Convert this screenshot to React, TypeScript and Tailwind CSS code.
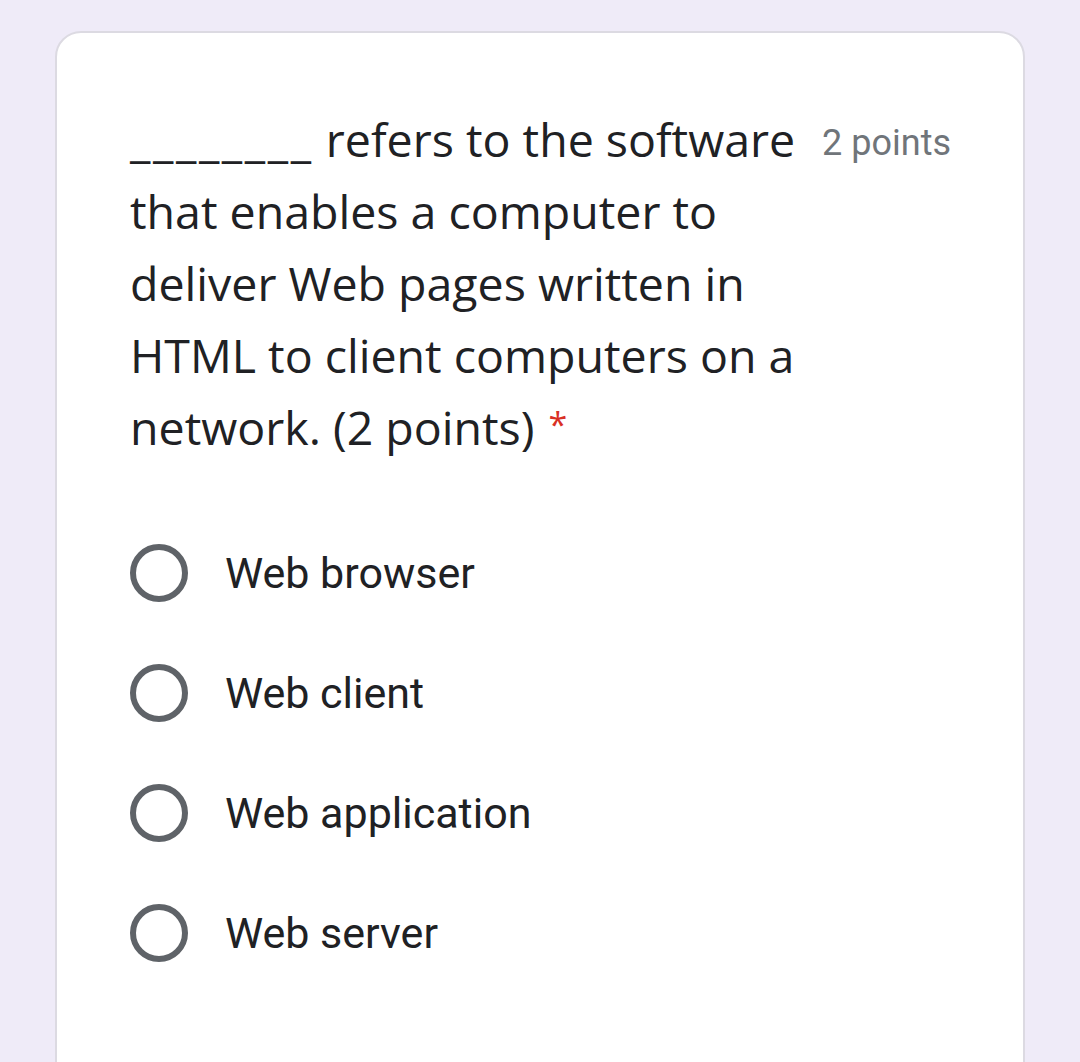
export default function App() {
  const options = ['Web browser', 'Web client', 'Web application', 'Web server'];

  return (
    <div className="min-h-[1062px] bg-[#efebf8] px-[55px] pt-[31px] overflow-hidden">
      <div className="bg-white border-2 border-[#dcdae2] rounded-[26px] h-[1080px] pl-[73px] pr-[72px] pt-[70px]">
        <div className="flex items-start">
          <div
            className="flex-1 max-w-[705px] text-[46.5px] leading-[72px] text-[#202124]"
            style={{ fontFamily: '"Open Sans", sans-serif' }}
          >
            <span className="tracking-[2.6px]">________</span> refers to the software that enables a computer to
            deliver Web pages written in HTML to client computers on a network. (2 points)
            <span className="relative -top-[8px] ml-[14px] text-[34px] text-[#d93025]">*</span>
          </div>
          <div
            className="ml-auto shrink-0 pt-[4px] text-[36px] leading-[72px] text-[#70757a]"
            style={{ fontFamily: 'Roboto, sans-serif' }}
          >
            2 points
          </div>
        </div>

        <div className="mt-[76px] flex flex-col gap-[62px]">
          {options.map((opt) => (
            <div key={opt} className="flex items-center h-[58px]">
              <div className="w-[58px] h-[58px] rounded-full border-[6px] border-[#5f6368] shrink-0" />
              <span
                className="ml-[37px] text-[43px] text-[#202124]"
                style={{ fontFamily: 'Roboto, sans-serif' }}
              >
                {opt}
              </span>
            </div>
          ))}
        </div>
      </div>
    </div>
  );
}
